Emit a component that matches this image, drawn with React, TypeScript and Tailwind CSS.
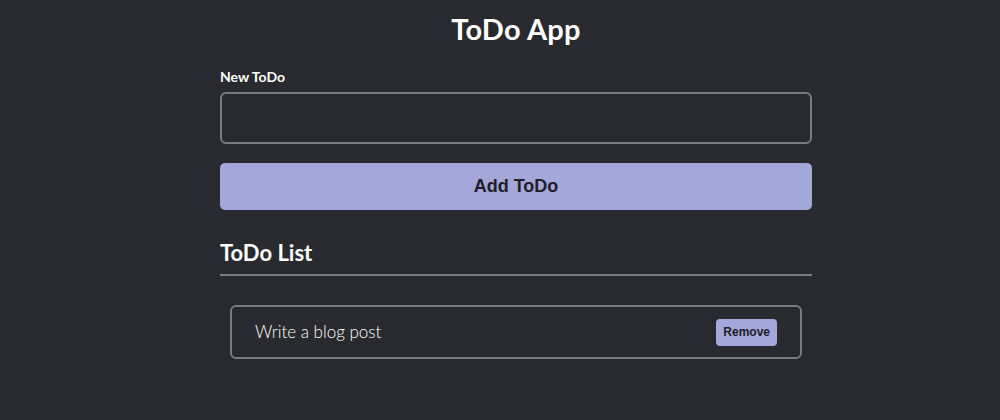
export default function App() {
  return (
    <div className="min-h-[420px] w-full bg-[#282a2f] font-['Lato',sans-serif] text-white">
      <div className="ml-[220px] w-[592px] pt-[11px]">
        <h1 className="text-center text-[29px] font-bold leading-[36px] tracking-[0.2px]">ToDo App</h1>

        {/* New todo form */}
        <label className="mt-[22px] block text-[14px] font-bold leading-[16px]">New ToDo</label>
        <input
          type="text"
          className="mt-[7px] block h-[52px] w-full rounded-[6px] border-2 border-[#7b7c80] bg-transparent px-3 text-white outline-none"
        />
        <button className="mt-[19px] h-[47px] w-full rounded-[5px] bg-[#a3a7d9] font-['Liberation_Sans',sans-serif] text-[18px] font-bold text-[#1e2027]">
          Add ToDo
        </button>

        {/* List */}
        <h2 className="mt-[29px] text-[22px] font-bold leading-[28px]">ToDo List</h2>
        <div className="mt-[7px] h-[2px] w-full bg-[#7b7c80]" />

        <ul className="mt-[29px] px-[10px]">
          <li className="flex h-[54px] items-center justify-between rounded-[6px] border-2 border-[#7b7c80] pl-[23px] pr-[23px]">
            <span className="text-[17px] font-light text-white">Write a blog post</span>
            <button className="h-[27px] rounded-[4px] bg-[#a3a7d9] px-[7px] font-['Liberation_Sans',sans-serif] text-[12px] font-bold text-[#1e2027]">
              Remove
            </button>
          </li>
        </ul>
      </div>
    </div>
  );
}
